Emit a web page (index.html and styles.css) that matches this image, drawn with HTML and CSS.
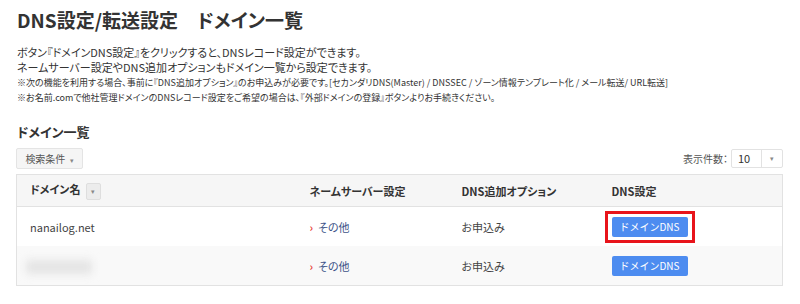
FILE: index.html
```html
<!DOCTYPE html>
<html lang="ja">
<head>
  <meta charset="UTF-8" />
  <title>DNS設定/転送設定 ドメイン一覧</title>
  <link rel="stylesheet" href="styles.css">
</head>
<body>
  <h1>DNS設定/転送設定　ドメイン一覧</h1>

  <div class="intro">
    <p>ボタン『ドメインDNS設定』をクリックすると、DNSレコード設定ができます。</p>
    <p>ネームサーバー設定やDNS追加オプションもドメイン一覧から設定できます。</p>
    <p class="note">※次の機能を利用する場合、事前に『DNS追加オプション』のお申込みが必要です。[セカンダリDNS(Master) / DNSSEC / ゾーン情報テンプレート化 / メール転送/ URL転送]</p>
    <p class="note">※お名前.comで他社管理ドメインのDNSレコード設定をご希望の場合は、『外部ドメインの登録』ボタンよりお手続きください。</p>
  </div>

  <h2>ドメイン一覧</h2>

  <div class="toolbar">
    <button class="filter">検索条件 <span class="caret">▾</span></button>
    <div class="per-page">
      <span>表示件数：</span>
      <div class="select">
        <span class="value">10</span>
        <span class="arrow">▾</span>
      </div>
    </div>
  </div>

  <table class="domains">
    <colgroup>
      <col class="c-name">
      <col class="c-ns">
      <col class="c-opt">
      <col>
    </colgroup>
    <thead>
      <tr>
        <th>ドメイン名 <span class="sort">▾</span></th>
        <th>ネームサーバー設定</th>
        <th>DNS追加オプション</th>
        <th>DNS設定</th>
      </tr>
    </thead>
    <tbody>
      <tr>
        <td>nanailog.net</td>
        <td><a class="ns" href="#">その他</a></td>
        <td>お申込み</td>
        <td><span class="marked"><button class="dns">ドメインDNS</button></span></td>
      </tr>
      <tr class="alt">
        <td><span class="blurred"></span></td>
        <td><a class="ns" href="#">その他</a></td>
        <td>お申込み</td>
        <td><button class="dns">ドメインDNS</button></td>
      </tr>
    </tbody>
  </table>
</body>
</html>
```

FILE: styles.css
```css
body {
  margin: 0;
  padding: 0 17px 0 16px;
  font-family: "Noto Sans CJK JP", "Noto Sans", sans-serif;
  font-feature-settings: "palt";
  color: #333;
  background: #fff;
}

h1 {
  margin: 8px 0 0 1px;
  font-size: 19px;
  line-height: 24px;
  font-weight: 700;
}

.intro {
  margin-top: 13px;
}

.intro p {
  margin: 0;
  font-size: 11px;
  line-height: 15px;
  padding-left: 1px;
}

.intro p.note {
  font-size: 9px;
  line-height: 15px;
}

h2 {
  margin: 18px 0 0 1px;
  font-size: 13px;
  line-height: 18px;
  font-weight: 700;
}

.toolbar {
  display: flex;
  justify-content: space-between;
  align-items: center;
  margin-top: 7px;
  height: 21px;
}

.filter {
  height: 21px;
  width: 67px;
  padding: 0;
  font-family: inherit;
  font-size: 10px;
  color: #555;
  background: #f5f5f5;
  border: 1px solid #e4e4e4;
  border-radius: 2px;
}

.caret {
  font-size: 7px;
  color: #888;
  margin-left: 2px;
}

.per-page {
  display: flex;
  align-items: center;
  font-size: 10px;
  color: #555;
}

.select {
  display: flex;
  width: 52px;
  height: 19px;
  margin-left: 3px;
  border: 1px solid #e2e2e2;
  border-radius: 2px;
  box-sizing: border-box;
  background: #fff;
}

.select .value {
  flex: 1;
  padding-left: 6px;
  font-size: 11px;
  line-height: 17px;
  color: #333;
}

.select .arrow {
  width: 20px;
  border-left: 1px solid #e2e2e2;
  text-align: center;
  font-size: 7px;
  line-height: 17px;
  color: #888;
}

.domains {
  width: 100%;
  margin-top: 5px;
  border-collapse: collapse;
  border: 1px solid #e2e2e2;
  font-size: 11px;
}

.c-name { width: 280px; }
.c-ns { width: 152px; }
.c-opt { width: 150px; }

.domains th {
  height: 31px;
  padding: 0 0 0 13px;
  text-align: left;
  font-weight: 700;
  background: #f6f6f6;
  border-bottom: 1px solid #e2e2e2;
  color: #333;
}

.sort {
  display: inline-block;
  width: 13px;
  height: 15px;
  margin-left: 3px;
  vertical-align: middle;
  background: #ececec;
  border: 1px solid #dedede;
  border-radius: 2px;
  font-size: 7px;
  line-height: 15px;
  text-align: center;
  font-weight: 400;
  color: #888;
}

.domains td {
  height: 39px;
  padding: 0 0 0 13px;
  color: #444;
}

.domains tr.alt td {
  background: #f9f9f9;
}

.ns {
  color: #3d5387;
  text-decoration: none;
}

.ns::before {
  content: "›";
  color: #e8473c;
  margin-right: 5px;
  font-weight: 700;
}

.dns {
  width: 76px;
  height: 20px;
  padding: 0;
  font-family: inherit;
  font-size: 10px;
  color: #fff;
  background: #4d8cf0;
  border: none;
  border-radius: 2px;
  vertical-align: middle;
}

.marked {
  display: inline-block;
  margin: 0 -7px;
  padding: 3px 4px;
  border: 3px solid #e8141b;
  line-height: 0;
}

.blurred {
  display: inline-block;
  width: 66px;
  height: 14px;
  margin-left: -4px;
  vertical-align: middle;
  background: #e4e4e4;
  filter: blur(4px);
}
```
